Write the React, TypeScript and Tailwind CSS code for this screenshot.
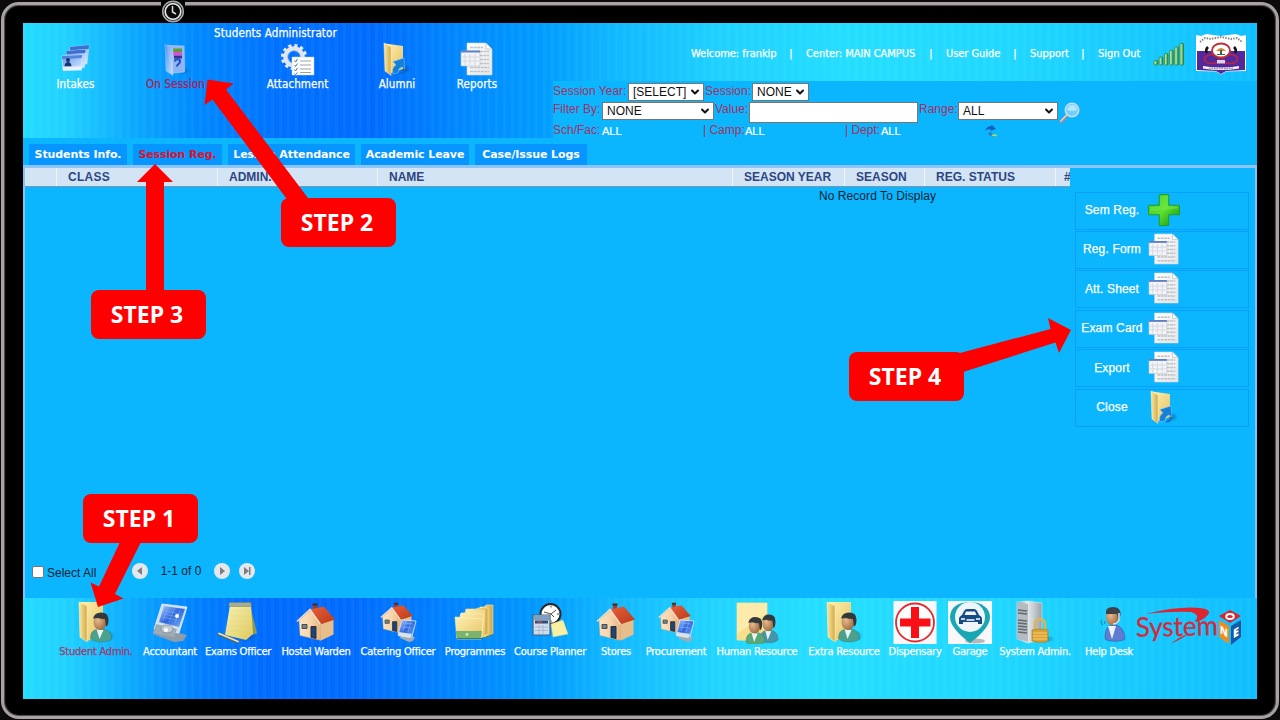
import React from "react";
import { ChevronDown } from "lucide-react";

const Defs = () => (
  <svg className="absolute h-0 w-0" aria-hidden="true">
    <defs>
      <linearGradient id="folder" x1="0" y1="0" x2="1" y2="1">
        <stop offset="0" stopColor="#fdf0b0" />
        <stop offset="1" stopColor="#e6c263" />
      </linearGradient>
      <linearGradient id="folderDark" x1="0" y1="0" x2="1" y2="0">
        <stop offset="0" stopColor="#fbe9a0" />
        <stop offset="1" stopColor="#d2a94b" />
      </linearGradient>
      <linearGradient id="glass" x1="0" y1="0" x2="1" y2="1">
        <stop offset="0" stopColor="#5c94ec" />
        <stop offset="1" stopColor="#dceeff" />
      </linearGradient>
      <linearGradient id="green" x1="0" y1="0" x2="1" y2="1">
        <stop offset="0" stopColor="#2fc423" />
        <stop offset=".5" stopColor="#5ee02e" />
        <stop offset="1" stopColor="#128c10" />
      </linearGradient>
      <linearGradient id="bars" x1="0" y1="0" x2="1" y2="0">
        <stop offset="0" stopColor="#d9f5c4" />
        <stop offset=".5" stopColor="#8fd28a" />
        <stop offset="1" stopColor="#1d7a3a" />
      </linearGradient>
      <linearGradient id="paper" x1="0" y1="0" x2="1" y2="1">
        <stop offset="0" stopColor="#ffffff" />
        <stop offset="1" stopColor="#e4e6e9" />
      </linearGradient>
      <linearGradient id="wall" x1="0" y1="0" x2="1" y2="0">
        <stop offset="0" stopColor="#fbe3c3" />
        <stop offset=".55" stopColor="#f6d3a8" />
        <stop offset="1" stopColor="#e3b27e" />
      </linearGradient>
      <linearGradient id="roof" x1="0" y1="0" x2="1" y2="1">
        <stop offset="0" stopColor="#e8603c" />
        <stop offset="1" stopColor="#b83a18" />
      </linearGradient>
      <linearGradient id="note" x1="0" y1="0" x2="1" y2="1">
        <stop offset="0" stopColor="#f8f2b4" />
        <stop offset="1" stopColor="#ddc95b" />
      </linearGradient>
      <linearGradient id="steel" x1="0" y1="0" x2="1" y2="0">
        <stop offset="0" stopColor="#8b9298" />
        <stop offset=".4" stopColor="#e9edf0" />
        <stop offset="1" stopColor="#9aa2a8" />
      </linearGradient>
      <linearGradient id="screenBlue" x1="0" y1="0" x2="1" y2="1">
        <stop offset="0" stopColor="#a9cdfa" />
        <stop offset=".5" stopColor="#2e67dd" />
        <stop offset="1" stopColor="#7fb2f5" />
      </linearGradient>
      <radialGradient id="face" cx=".35" cy=".4" r=".8">
        <stop offset="0" stopColor="#e8b98c" />
        <stop offset="1" stopColor="#8d5a33" />
      </radialGradient>
      <radialGradient id="shadow">
        <stop offset="0" stopColor="#033b78" stopOpacity=".5" />
        <stop offset="1" stopColor="#033b78" stopOpacity="0" />
      </radialGradient>
    </defs>
  </svg>
);

const IdCards = () => (
  <svg viewBox="0 0 30 30" className="h-[30px] w-[30px]">
    <path d="m9 3 19-2-2 19-18 1Z" fill="url(#glass)" stroke="#c5defc" strokeWidth=".5" />
    <path d="m9 3 19-2-.4 4L9 6.500Z" fill="#3b70cf" />
    <path d="m5.500 7 19-1.500-1 18-18 .500Z" fill="url(#glass)" stroke="#d9ecff" strokeWidth=".5" />
    <path d="m5.500 7 19-1.500-.2 3.500-19 1Z" fill="#3b70cf" />
    <path d="m1 12 20-1-.500 15L2 26.500Z" fill="url(#glass)" stroke="#e3f1ff" strokeWidth=".6" />
    <path d="m1 12 20-1-.2 3L1.200 15Z" fill="#5286dc" />
    <circle cx="7" cy="16" r="2" fill="#15356f" />
    <path d="M3.500 22.500c0-6 7-6 7 0Z" fill="#15356f" />
    <path d="M2 22.500h18.500v3.500L2 26.500Z" fill="#eef7ff" opacity=".85" />
  </svg>
);

const SessionFolder = () => (
  <svg viewBox="0 0 28 33" className="h-[33px] w-[28px]">
    <ellipse cx="21" cy="28" rx="7" ry="3.500" fill="url(#shadow)" />
    <path d="M5 2.500 22 3l.500 26-12 1Z" fill="#8fb4f4" stroke="#b8d7ff" strokeWidth=".6" />
    <path d="M11 5.500h9v4h-9z" fill="#5c9a35" />
    <path d="M11 9h9v3h-9z" fill="#e34dd0" />
    <path d="M12 12.500h8v3h-8z" fill="#3a2f9a" />
    <path d="M13 18.500c0-3 5-3 5 0s-3 2-3 5" fill="none" stroke="#214bc6" strokeWidth="2" />
    <path d="M3 1 11 6v26.500L4 28Z" fill="url(#glass)" opacity=".85" stroke="#9fc8ff" strokeWidth=".5" />
  </svg>
);

const GearList = () => (
  <svg viewBox="0 0 34 33" className="h-[33px] w-[34px]">
    <circle cx="13" cy="14" r="8.500" fill="none" stroke="#e1e6ee" strokeWidth="4.500" />
    <circle cx="13" cy="14" r="11.600" fill="none" stroke="#e6eaf1" strokeWidth="3" strokeDasharray="3.2 2.870" />
    <circle cx="13" cy="14" r="6.300" fill="none" stroke="#a4b3cc" strokeWidth=".7" />
    <path d="M11 14h22v18H11z" fill="#fff" stroke="#c3cfdf" strokeWidth=".5" />
    <path d="M19 18h11M19 22h11M19 26h11M19 29.500h11" stroke="#9aa1ab" strokeWidth="1" />
    <path d="m13.500 17.500 1 1.500 2-3m-3 6 1 1.500 2-3m-3 6 1 1.500 2-3m-3 5.500 1 1 2-2" fill="none" stroke="#2b6fb5" strokeWidth=".9" />
  </svg>
);

const FolderArrow = () => (
  <svg viewBox="0 0 28 34" className="h-[34px] w-[28px]">
    <ellipse cx="22" cy="27" rx="6" ry="5" fill="url(#shadow)" />
    <path d="M2 1.500 20 4v23l-12 4Z" fill="url(#folder)" />
    <path d="M1 1 8 5v28.500L2 29Z" fill="url(#folderDark)" stroke="#fff3bd" strokeWidth=".5" />
    <path d="M10 32c-1-5 0-7 3-9l-3-3.500L21 16l1 11-3-2c-3 1-4 3-3.500 5.500Z" fill="#1580d8" stroke="#7cc8ff" strokeWidth=".5" />
    <path d="M16 31.500c4 0 5-2 5-4.500" fill="none" stroke="#126bbf" strokeWidth="2" />
  </svg>
);

const ReportDoc = () => (
  <svg viewBox="0 0 34 34" className="h-[34px] w-[34px]">
    <path d="M7 1h19l6 6v26H7Z" fill="url(#paper)" stroke="#d0d3d6" strokeWidth=".6" />
    <path d="M26 1v6h6Z" fill="#fff" stroke="#a9adb2" strokeWidth=".6" />
    <path d="M10 5.500h13M20 9.500h9M20 13.500h9M20 17.500h9M20 21.500h9M10 25.500h19M10 29.500h19" stroke="#bfc3c8" strokeWidth="1.500" strokeDasharray="3 .6" />
    <path d="M1 9h19v15H1Z" fill="#f3f4f7" stroke="#b6bcc6" strokeWidth=".6" />
    <path d="M1 8.500h19v2H1Z" fill="#5f81c4" />
    <path d="M5 12v11M10 12v11M15 12v11M2 15h17M2 19h17" stroke="#d4d8df" strokeWidth="1" />
  </svg>
);

const Signal = () => (
  <svg viewBox="0 0 32 24" className="h-[24px] w-[32px] shrink-0">
    {[0, 1, 2, 3, 4, 5].map((i) => (
      <rect key={i} x={1 + i * 5.200} y={18.500 - i * 3.400} width="3.600" height={4.500 + i * 3.400} rx=".8" fill="url(#bars)" stroke="#23843f" strokeWidth=".8" />
    ))}
  </svg>
);

const Crest = () => (
  <svg viewBox="0 0 52 42" className="h-[42px] w-[52px] shrink-0">
    <path d="M1 2 6 3 11 1 26 3 41 1l5 2 5-1v36l-20 .5-5 3-5-3-20-.5Z" fill="#fff" />
    <path d="M2 18h48v19l-19 1-5 3-5-3-19-1Z" fill="#54289a" />
    <path d="M5 9 10 5l6 1 10-2 10 2 6-1 5 4" fill="none" stroke="#8a8683" strokeWidth="2" strokeDasharray="1.500 1.200" />
    <path d="M13 14q-3 3-1 6M39 14q3 3 1 6" fill="none" stroke="#111" strokeWidth="2.500" />
    <ellipse cx="17" cy="26" rx="7.500" ry="4.500" fill="none" stroke="#b4264a" strokeWidth="1.700" />
    <ellipse cx="35" cy="26" rx="7.500" ry="4.500" fill="none" stroke="#b4264a" strokeWidth="1.700" />
    <ellipse cx="26" cy="17.500" rx="9" ry="7" fill="#fff" stroke="#bd3038" strokeWidth="1.900" />
    <path d="M21 18q5-6 10 0Z" fill="#de8133" />
    <path d="M25 17h2v4h3v1h-8v-1h3Z" fill="#3c5e53" />
    <path d="M22 27h8v3.500h-8z" fill="#d9d4e8" />
    <path d="M8 33q18 3 36 0v2.500q-18 3-36 0Z" fill="#f7f5fa" />
    <path d="M14 35q12 1.500 24 0" fill="none" stroke="#6a607c" strokeWidth="1" strokeDasharray="1.500 1" />
  </svg>
);

const Magnifier = () => (
  <svg viewBox="0 0 22 22" className="h-[22px] w-[22px] shrink-0">
    <path d="M9 12 2 20" stroke="#a39088" strokeWidth="3" strokeLinecap="round" />
    <path d="M9 11.500 1.800 19" stroke="#e1d4d5" strokeWidth="1.300" strokeLinecap="round" />
    <circle cx="13" cy="8" r="6.700" fill="#70d0fb" stroke="#c9dcec" strokeWidth="1.600" />
    <path d="M8 8q1-5 6-5 4 1 4 5-5 2-10 0Z" fill="#c3edff" opacity=".8" />
  </svg>
);

const Reload = () => (
  <svg viewBox="0 0 16 14" className="h-[14px] w-[16px]">
    <path d="M2 7q2-5 6-5l1-1 4 4-6 2 .500-2Q4 5 2 7Z" fill="#155fc0" />
    <path d="m5 9 4-1-1 2 5 2-2 1-5-2Z" fill="#2c75bd" />
    <path d="M8 12q3-3 6-1l-1 1.500Z" fill="#a7e34b" />
  </svg>
);

const Plus = () => (
  <svg viewBox="0 0 34 34" className="h-[34px] w-[34px]">
    <path d="M12 .5h10v11.500h11.500v10H22v11.500H12V22H.5V12H12Z" fill="url(#green)" stroke="#1f9c24" strokeWidth="1" strokeLinejoin="round" />
    <path d="M13 2h8v11h11v2.500L2 18.500V13h11Z" fill="#8dfa5f" opacity=".3" />
  </svg>
);

const Person = ({ shirt = "#4ba08e" }: { shirt?: string }) => (
  <g>
    <path d="M0 26c0-8 4-10 10-10s11 2 11 10c-5 4-16 4-21 0Z" fill={shirt} stroke="#2b7467" strokeWidth=".4" />
    <path d="m6 16 3 10 4-9Z" fill="#e7f6f0" />
    <ellipse cx="9.500" cy="9" rx="6.500" ry="8" fill="url(#face)" />
    <path d="M2.500 5.500Q4-.500 10.500-.500q7.500 0 7.500 7c0 4-1 7-2.500 7l-1-7.500q-5 0-7-1-3 0-5 .500Z" fill="#33383a" />
  </g>
);

const FolderUser = () => (
  <svg viewBox="0 0 38 44" className="h-[44px] w-[38px] shrink-0">
    <ellipse cx="31" cy="36" rx="7" ry="6" fill="url(#shadow)" />
    <path d="M3 2h23v34l-16 5Z" fill="url(#folder)" />
    <path d="M2 2 10 6v36L3 37Z" fill="url(#folderDark)" stroke="#fff0b0" strokeWidth=".6" />
    <g transform="translate(13.500 13)"><Person /></g>
  </svg>
);

const Terminal = () => (
  <svg viewBox="0 0 38 44" className="h-[44px] w-[38px] shrink-0">
    <path d="m2 34 3-7 31 8-4 6-9 1Z" fill="#8f9da9" />
    <path d="m11 4 25 3-8 26L3 29Z" fill="#cfe0f3" stroke="#e8f3ff" strokeWidth=".8" />
    <path d="m13 6 21 3-6 18-20-5Z" fill="url(#screenBlue)" />
    <path d="m13 11 16 3m-17 0 15 3m-16 0 15 3M17 8l-5 12M23 9l-5 13M29 10l-5 13" stroke="#7ba8f4" strokeWidth=".6" />
    <path d="m5 24 21 5-3 8-21-4Z" fill="#9eacb8" />
    <ellipse cx="16" cy="29" rx="6" ry="4" fill="#c4ccd3" stroke="#6f7b85" strokeWidth=".6" />
    <circle cx="15" cy="30" r="2" fill="#fff" />
    <circle cx="26" cy="16" r="2" fill="#fff" />
  </svg>
);

const Notepad = () => (
  <svg viewBox="0 0 42 44" className="h-[44px] w-[42px] shrink-0">
    <ellipse cx="29" cy="37" rx="12" ry="5" fill="url(#shadow)" />
    <path d="m33 5 7 28-8 3Z" fill="#8a9a52" />
    <path d="M13 5h21l2 29-7 6-21-5Z" fill="url(#note)" />
    <path d="M12 2.500h22l.5 4H12Z" fill="#a3ad98" stroke="#70805c" strokeWidth=".5" />
    <path d="M13 11h20M12.500 16h21M12 21h22M11 26h23M10 31h24" stroke="#e0d283" strokeWidth=".5" />
    <path d="m2 34 19 8" stroke="#56645f" strokeWidth="3" strokeLinecap="round" />
    <path d="m2 33.500 19 8" stroke="#f0e3b8" strokeWidth="1.800" strokeLinecap="round" />
  </svg>
);

const HouseShape = () => (
  <g>
    <path d="m3 18 11-10 11 11v19L4 33Z" fill="url(#wall)" stroke="#c49b74" strokeWidth=".4" />
    <path d="m24.500 19 13-4v17L25 38Z" fill="#e8bd8c" />
    <path d="M17 2h4v9h-4z" fill="#9d3d22" />
    <path d="M16.500 1h5v2h-5z" fill="#55231a" />
    <path d="M14 7 28 4l11 13-15 5Z" fill="url(#roof)" />
    <path d="M1 19 14 7l10.500 15" fill="none" stroke="#f7dcc4" strokeWidth="1.600" />
    <path d="M15 24h5v12l-5-1.200Z" fill="#17457e" stroke="#3a2a28" />
    <path d="M6 22h5v4H6z" fill="#698795" stroke="#4a413b" strokeWidth=".9" />
  </g>
);

const House = () => (
  <svg viewBox="0 0 42 44" className="h-[44px] w-[42px] shrink-0">
    <g transform="translate(1 2.500)"><HouseShape /></g>
  </svg>
);

const HouseTablet = () => (
  <svg viewBox="0 0 40 44" className="h-[44px] w-[40px] shrink-0">
    <g transform="translate(2 2) scale(.84 .82)"><HouseShape /></g>
    <path d="m22 38 2-4 13 3-2 4-4 1Z" fill="#9cacb8" />
    <path d="m24 20 14 1-4 16-14-2Z" fill="url(#screenBlue)" stroke="#d9eaff" strokeWidth=".8" />
    <path d="m25 23 10 1m-11 3 10 1M28 21l-3 10M33 22l-3 10" stroke="#8fb6f8" strokeWidth=".6" />
    <path d="m21 32 13 2-2 4-12-2Z" fill="#dbe3ea" />
  </svg>
);

const Folders = () => (
  <svg viewBox="0 0 42 44" className="h-[44px] w-[42px] shrink-0">
    <path d="M26 9V7h4l2-2h7v29l-9 4Z" fill="url(#folderDark)" stroke="#f7e7a5" strokeWidth=".6" />
    <path d="M17 12V9h5l2-1h10v26l-9 4Z" fill="url(#folderDark)" stroke="#fbeeb0" strokeWidth=".6" />
    <path d="m11 13 1-4h5l1 1h13l-1 26H12Z" fill="url(#folder)" stroke="#f3dc8e" strokeWidth=".6" />
    <path d="m6 16 1-3h7l1 1h15l-2 24H8Z" fill="url(#folder)" stroke="#fcf0b8" strokeWidth=".6" />
    <path d="m1 17 28 2-2 20H3Z" fill="url(#folder)" stroke="#fff3bd" strokeWidth=".6" />
    <path d="M1.500 31H28l-1 7H3Z" fill="#7cb36c" />
    <path d="M3 38.500h25l11-4" fill="none" stroke="#3c7d54" strokeWidth="1" />
    <circle cx="13" cy="34.500" r="1.400" fill="#c8f0b8" />
  </svg>
);

const Planner = () => (
  <svg viewBox="0 0 38 44" className="h-[44px] w-[38px] shrink-0">
    <circle cx="19.500" cy="14" r="10" fill="#fff" stroke="#28292b" strokeWidth="2" />
    <path d="m20 14 5-4M20 14l-7-2M20 14l3 3M20 5.500v2M28 14h-2M20 22.500v-2" stroke="#574b45" strokeWidth="1" />
    <path d="M2 15h17v20H2z" fill="#cfdcec" stroke="#44607c" strokeWidth="1.200" />
    <path d="M3 16h15v4H3z" fill="#7e9fc0" />
    <path d="M4 20.500h13v3H4z" fill="#2f4a74" />
    <path d="M6 21.500h5v1H6z" fill="#e0523b" />
    <path d="M4 27h13M4 30.500h13M8 25v9M12 25v9" stroke="#9fb4ca" strokeWidth=".8" />
    <path d="m20 24 12-4 5 14-15 3Z" fill="#f8f1a4" stroke="#dfd078" strokeWidth=".4" />
  </svg>
);

const TwoUsers = () => (
  <svg viewBox="0 0 44 44" className="h-[44px] w-[44px] shrink-0">
    <path d="M2 3h30v38L2 40Z" fill="#f7e08c" stroke="#f7dd82" strokeWidth=".8" />
    <path d="M2 3h30v10L2 34Z" fill="#fcebab" />
    <g transform="translate(25 15)scale(.86 .96)"><Person shirt="#4795ab" /></g>
    <g transform="translate(11 17.500)scale(.9 .94)"><Person shirt="#5aa77a" /></g>
  </svg>
);

const Dispensary = () => (
  <svg viewBox="0 0 44 44" className="h-[44px] w-[44px] shrink-0">
    <path d="M.500 1h43v43H.500z" fill="#f8f8fa" />
    <circle cx="22" cy="22.500" r="19" fill="#fff" stroke="#e32a30" strokeWidth="1.800" />
    <path d="M18 7h8v11.500h11.500v8H26V38h-8V26.500H7v-8h11Z" fill="#f91016" />
  </svg>
);

const Garage = () => (
  <svg viewBox="0 0 44 44" className="h-[44px] w-[44px] shrink-0">
    <path d="M0 1h44v43H0z" fill="#f8f8fa" />
    <ellipse cx="27" cy="41" rx="10" ry="2.500" fill="#b3b8bc" />
    <path d="M22 43Q2 28 2 17C2 7 11 2 22 2s20 6 20 15Q42 28 22 43Z" fill="#19a7b4" />
    <circle cx="22" cy="17" r="15" fill="#eef6f9" />
    <path d="M11 18q1-2 3-3l2-4q1-2 3-2h7q2 0 3 2l2 4q2 1 3 3v6h-4v-2H15v2h-4Z" fill="#174a82" />
    <path d="m16.500 15 1.500-3.500h9l1.500 3.500Z" fill="#edf5fa" />
    <path d="M13 19h4M28 19h4M18.500 20h8" stroke="#fff" strokeWidth="1.500" />
  </svg>
);

const Server = () => (
  <svg viewBox="0 0 42 44" className="h-[44px] w-[42px] shrink-0">
    <ellipse cx="31" cy="39" rx="10" ry="4" fill="url(#shadow)" />
    <path d="m3 2 11-1 14 2v37l-14 3-11-4Z" fill="url(#steel)" stroke="#e9eef2" strokeWidth=".5" />
    <path d="M3 2 14 4v38L3 38Z" fill="#b5bbc0" />
    <path d="m4 10 9 1M4 13l9 1m-9 6 9 1m-9 2 9 1m-9 2 9 1m-9 2 9 1m-9 2 9 1" stroke="#61696f" strokeWidth="1.500" />
    <path d="M21 31v-6q0-6 5-6t5 6v6" fill="none" stroke="#d9b55b" strokeWidth="2.600" />
    <path d="M18 30q8-2 16 0v11q-8 3-16 0Z" fill="#d9a233" stroke="#a6781f" strokeWidth=".6" />
    <path d="M19 33h14M19 36h14M19 39h14" stroke="#f4d882" strokeWidth=".9" />
  </svg>
);

const HelpDesk = () => (
  <svg viewBox="0 0 28 44" className="ml-[7px] h-[44px] w-[28px] shrink-0">
    <path d="M6 39c0-9 2-14 9-14s10 5 11 14c-4 3-16 3-20 0Z" fill="#5f7dd0" stroke="#2d4a9c" strokeWidth=".5" />
    <path d="m9 26 4 13 4-13Z" fill="#eef4fb" />
    <ellipse cx="13.500" cy="17" rx="6.500" ry="8.500" fill="url(#face)" />
    <path d="M7 14Q6 7 14 7q8 0 7.500 8l-2 6-1.500-7q-7 0-11 0Z" fill="#3d4248" />
    <path d="M20 13v7q-2 4-6 4" fill="none" stroke="#dde6ef" strokeWidth="1.500" />
    <path d="M3 20q-2 3 1 5M6 21q-1 2 0 3" fill="none" stroke="#1d98a6" strokeWidth="1.300" />
  </svg>
);

const SystemOneLogo = () => (
  <svg viewBox="0 0 108 44" className="h-[44px] w-[108px]">
    <text x="1" y="31" fontFamily="Lato, sans-serif" fontSize="27" fill="#d32b3a" stroke="#d32b3a" strokeWidth=".3" textLength="82" lengthAdjust="spacingAndGlyphs" transform="rotate(-1 40 30)">System</text>
    <path d="M11 9Q43 1 65 3q10 1 9 5-2 5-12 9l-2-1q6-6-4-9-18-1-45 2Z" fill="#dc2630" />
    <path d="M36 38.500q9-7 17-9.500-6 5-17 9.500Z" fill="#dc2630" />
    <path d="m84 11 11-6 11 6-11 7Z" fill="#d9252e" />
    <path d="m84 15 10 6v18l-10-7Z" fill="#f28b1e" />
    <path d="m96 21 10-6v17l-10 8Z" fill="#165aa5" />
    <ellipse cx="95" cy="11.500" rx="3.800" ry="2.500" fill="none" stroke="#fff" strokeWidth="1.900" />
    <text x="0" y="0" transform="matrix(.85 .5 0 1 85 28)" fontFamily="Open Sans, sans-serif" fontSize="11" fontWeight="800" fill="#fff">N</text>
    <text x="0" y="0" transform="matrix(.9 -.55 0 1 98 33.500)" fontFamily="Open Sans, sans-serif" fontSize="12" fontWeight="800" fill="#fff">E</text>
  </svg>
);

const PagerButton = ({ kind }: { kind: "prev" | "next" | "last" }) => (
  <button className="flex h-4 w-4 items-center justify-center rounded-full bg-[#e4e8ec]">
    <svg viewBox="0 0 16 16" className="h-4 w-4">
      {kind === "prev" && <path d="M10 4v8L5 8Z" fill="#7d7d7f" />}
      {kind === "next" && <path d="M6 4v8l5-4Z" fill="#7d7d7f" />}
      {kind === "last" && <path d="M5 4v8l5-4Zm5 0h1.500v8H10Z" fill="#7d7d7f" />}
    </svg>
  </button>
);

const SelectBox = ({ value, className }: { value: string; className: string }) => (
  <div className={`flex items-center justify-between border border-[#767676] bg-white pl-[4px] pr-[2px] text-[12px] leading-none text-[#111] ${className}`}>
    <span>{value}</span>
    <ChevronDown className="h-[12px] w-[12px]" strokeWidth={4} />
  </div>
);

const modules = [
  { label: "Intakes", icon: <IdCards /> },
  { label: "On Session", icon: <SessionFolder />, active: true },
  { label: "Attachment", icon: <GearList /> },
  { label: "Alumni", icon: <FolderArrow /> },
  { label: "Reports", icon: <ReportDoc /> },
];

const tabs = [
  { label: "Students Info.", className: "w-[98px] text-white" },
  { label: "Session Reg.", className: "w-[89px] text-[#d8142f]" },
  { label: "Lesson Attendance", className: "w-[127px] text-white" },
  { label: "Academic Leave", className: "w-[108px] text-white" },
  { label: "Case/Issue Logs", className: "w-[112px] text-white" },
];

const columns = ["", "CLASS", "ADMIN.", "NAME", "SEASON YEAR", "SEASON", "REG. STATUS", "#"];

const actions = [
  { label: "Sem Reg.", icon: <Plus /> },
  { label: "Reg. Form", icon: <ReportDoc /> },
  { label: "Att. Sheet", icon: <ReportDoc /> },
  { label: "Exam Card", icon: <ReportDoc /> },
  { label: "Export", icon: <ReportDoc /> },
  { label: "Close", icon: <FolderArrow /> },
];

const dock = [
  { label: "Student Admin.", icon: <FolderUser />, active: true },
  { label: "Accountant", icon: <Terminal /> },
  { label: "Exams Officer", icon: <Notepad /> },
  { label: "Hostel Warden", icon: <House /> },
  { label: "Catering Officer", icon: <HouseTablet /> },
  { label: "Programmes", icon: <Folders /> },
  { label: "Course Planner", icon: <Planner /> },
  { label: "Stores", icon: <House /> },
  { label: "Procurement", icon: <HouseTablet /> },
  { label: "Human Resource", icon: <TwoUsers /> },
  { label: "Extra Resource", icon: <FolderUser /> },
  { label: "Dispensary", icon: <Dispensary /> },
  { label: "Garage", icon: <Garage /> },
  { label: "System Admin.", icon: <Server /> },
  { label: "Help Desk", icon: <HelpDesk /> },
];

const Bar = () => <span className="w-[30px] text-center">|</span>;

const Header = () => (
  <header className="flex h-[115px] bg-[repeating-linear-gradient(90deg,#ffffff0a_0px,#ffffff0a_3px,#ffffff00_3px,#ffffff00_8px),linear-gradient(90deg,#24dcff_0px,#20d0ff_45px,#0ca9ff_110px,#0089ff_175px,#0070ff_260px,#006cff_350px,#008cff_450px,#009cff_520px,#10b8ff_590px,#1fd2ff_700px,#24deff_830px,#20d8ff_980px,#0fbeff_1234px)]">
    <div className="w-[530px] pt-[3px] font-['DejaVu_Sans_Condensed','DejaVu_Sans',sans-serif] text-[11.500px] text-white [-webkit-text-stroke:0.25px]">
      <div className="ml-[3px] h-[15px] w-[499px] text-center leading-[15px] tracking-[0.13px]">Students Administrator</div>
      <nav className="ml-[3px] grid grid-cols-[99px_101px_143px_56px_104px]">
        {modules.map((m) => (
          <a key={m.label} className={`flex flex-col items-center whitespace-nowrap ${m.active ? "tracking-[0.15px] text-[#b01c55]" : "tracking-[0.1px]"}`}>
            <span className="flex h-[36px] items-center">{m.icon}</span>
            <span className="leading-[15px]">{m.label}</span>
          </a>
        ))}
      </nav>
    </div>
    <div className="flex w-[704px] flex-col">
      <div className="flex h-[58px] items-center pl-[138px] font-['DejaVu_Sans_Condensed','DejaVu_Sans',sans-serif] text-[11px] tracking-[-0.05px] text-white [-webkit-text-stroke:0.25px]">
        <div className="flex h-full w-[462px] items-center whitespace-nowrap pt-[5px]">
          <span className="w-[85px]">Welcome: frankip</span><Bar />
          <span className="w-[110px]">Center: MAIN CAMPUS</span><Bar />
          <span className="w-[54px]">User Guide</span><Bar />
          <span className="w-[38px]">Support</span><Bar />
          <span className="w-[43px]">Sign Out</span>
        </div>
        <div className="flex pt-[4px]"><Signal /></div>
        <div className="ml-[10px] flex pt-[3px]"><Crest /></div>
      </div>
      <div className="flex-1 bg-[#0bb6ff] text-[12px] leading-[15px] text-[#a83062]">
        <div className="flex h-[21px] pt-[2px]">
          <span className="w-[75px] pt-px">Session Year:</span>
          <SelectBox value="[SELECT]" className="h-[18px] w-[76px]" />
          <span className="w-[48px] pl-px pt-px">Session:</span>
          <SelectBox value="NONE" className="h-[18px] w-[57px]" />
        </div>
        <div className="flex h-[21px]">
          <span className="w-[49px]">Filter By:</span>
          <SelectBox value="NONE" className="h-[18px] w-[112px]" />
          <span className="w-[35px] pl-px">Value:</span>
          <div className="h-[21px] w-[169px] border border-[#767676] bg-white" />
          <span className="w-[40px] pl-px">Range:</span>
          <SelectBox value="ALL" className="h-[18px] w-[100px]" />
          <div className="ml-px"><Magnifier /></div>
        </div>
        <div className="flex h-[15px] items-center whitespace-nowrap">
          <span className="w-[49px]">Sch/Fac:</span><span className="w-[101px] pt-px text-[11px] text-white [-webkit-text-stroke:0.2px]">ALL</span>
          <span className="w-[42px]">| Camp:</span><span className="w-[100px] pt-px text-[11px] text-white [-webkit-text-stroke:0.2px]">ALL</span>
          <span className="w-[36px]">| Dept:</span><span className="w-[102px] pt-px text-[11px] text-white [-webkit-text-stroke:0.2px]">ALL</span>
          <Reload />
        </div>
      </div>
    </div>
  </header>
);

const Callout = ({ text, className }: { text: string; className: string }) => (
  <div className={`absolute flex h-[49px] w-[115px] items-center justify-center rounded-[8px] bg-[#fe0000] pb-px pr-[3px] font-['Open_Sans',sans-serif] text-[23px] font-bold text-white ${className}`}>
    {text}
  </div>
);

export default function App() {
  return (
    <div className="relative h-[720px] w-[1280px] overflow-hidden bg-[#0c0b0c] font-['Liberation_Sans',Arial,sans-serif]">
      <Defs />
      <div className="absolute bottom-[1px] left-[1px] right-[1px] top-[2px] rounded-[18px] border-[3px] border-[#a8a2a5] bg-black shadow-[inset_0_0_1px_1px_#5a5658]" />
      <div className="absolute left-[161px] top-0 h-[24px] w-[24px] bg-black">
        <svg viewBox="0 0 24 24" className="h-[24px] w-[24px]">
          <circle cx="12" cy="11.500" r="10.300" fill="#222" stroke="#a9a9a9" strokeWidth="1.500" />
          <circle cx="12" cy="11.500" r="7.800" fill="#090909" stroke="#e4e4e4" strokeWidth="1.700" />
          <path d="M11.500 6v6l3.500 2" fill="none" stroke="#ddd" strokeWidth="1.500" />
        </svg>
      </div>
      <div className="relative ml-[23px] flex h-[699px] w-[1234px] flex-col pt-[23px]">
        <Header />
        <div className="flex h-[27px] gap-[6px] bg-[#0bb6ff] pl-[6px] pt-[6px] font-['DejaVu_Sans',Verdana,sans-serif] text-[11px] font-bold tracking-[-0.1px]">
          {tabs.map((t) => (
            <a key={t.label} className={`flex items-center justify-center whitespace-nowrap bg-[#0796ff] pt-[2px] ${t.className}`}>{t.label}</a>
          ))}
        </div>
        <main className="flex h-[433px] border-x-2 border-t-[3px] border-l-[#7fc4fb] border-r-[#7fc4fb] border-t-[#8cc4fb] bg-[#0bb6ff]">
          <section className="flex w-[1045px] flex-col">
            <div className="grid h-[19px] grid-cols-[32px_161px_160px_355px_112px_80px_131px_14px] overflow-hidden border-b border-[#7d95ad] bg-[#d3e4f5] text-[12px] font-bold text-[#2d4682]">
              {columns.map((c, i) => (
                <div key={i} className={`flex items-center whitespace-nowrap ${i === 7 ? "pl-[8px]" : "border-r border-[#eef5fb] pl-[11px]"} ${i === 1 ? "tracking-[0.3px]" : ""}`}>{c}</div>
              ))}
            </div>
            <div className="flex-1 pl-[794px] pt-[2px] text-[12px] leading-[15px] tracking-[0.06px] text-[#0b2234]">No Record To Display</div>
            <div className="flex h-[36px] pl-[7px] text-[12px] text-[#0b2234]">
              <span className="mt-[4px] h-[12px] w-[12px] rounded-[2px] border border-[#767676] bg-white" />
              <span className="ml-[3px] mt-[4px] w-[85px] leading-[15px]">Select All</span>
              <div className="flex h-[18px] items-center">
                <PagerButton kind="prev" />
                <span className="w-[66px] text-center">1-1 of 0</span>
                <PagerButton kind="next" />
                <span className="w-[9px]" />
                <PagerButton kind="last" />
              </div>
            </div>
          </section>
          <aside className="flex w-[180px] flex-col gap-[1.400px] pl-[5px] pt-[23.600px]">
            {actions.map((a) => (
              <button key={a.label} className="flex h-[38px] w-[174px] shrink-0 items-center border border-[#0a9ffa] text-[12px] tracking-[0.15px] text-white [-webkit-text-stroke:0.25px]">
                <span className="w-[72px] pb-px text-center">{a.label}</span>
                <span className="flex w-[32px] justify-center pb-[2px]">{a.icon}</span>
              </button>
            ))}
          </aside>
        </main>
        <footer className="flex h-[101px] bg-[repeating-linear-gradient(90deg,#ffffff0a_0px,#ffffff0a_3px,#ffffff00_3px,#ffffff00_8px),linear-gradient(90deg,#24dcff_0px,#20d0ff_45px,#0ca9ff_110px,#0080ff_175px,#006cff_240px,#006cff_330px,#0084ff_430px,#0098ff_510px,#12b8ff_590px,#20d4ff_690px,#24deff_800px,#20d8ff_960px,#0fbeff_1234px)]">
          <nav className="ml-[32px] grid grid-cols-[82px_66px_70px_86px_78px_76px_74px_58px_62px_100px_74px_68px_42px_88px_60px] pt-[2px] font-['DejaVu_Sans_Condensed','DejaVu_Sans',sans-serif] text-[11px] tracking-[-0.23px] [-webkit-text-stroke:0.25px]">
            {dock.map((d) => (
              <a key={d.label} className={`flex flex-col items-center whitespace-nowrap ${d.active ? "text-[#a03a6c]" : "text-white"}`}>
                {d.icon}
                <span className="leading-[16px]">{d.label}</span>
              </a>
            ))}
          </nav>
          <div className="-ml-[4px] pt-[7px]"><SystemOneLogo /></div>
        </footer>
      </div>
      <svg viewBox="0 0 1280 720" className="pointer-events-none absolute inset-0 h-[720px] w-[1280px]">
        <g fill="#fe0000">
          <path d="M207.500 79.500 233.500 83.500 226 89.500 311 202H289L212.500 99.500 204.500 105Z" />
          <path d="m155 164 18 18h-9v110h-18V182h-9Z" />
          <path d="M98 607 90.500 582.500 99 586.500 121 540H142L115 594 123.500 598.500Z" />
          <path d="M1071 330 1059 353 1055.500 342.500 960 373V353L1050.500 329 1048 318Z" />
        </g>
      </svg>
      <Callout text="STEP 2" className="left-[281px] top-[198px]" />
      <Callout text="STEP 3" className="left-[91px] top-[290px]" />
      <Callout text="STEP 4" className="left-[849px] top-[352px]" />
      <Callout text="STEP 1" className="left-[83px] top-[494px]" />
    </div>
  );
}
